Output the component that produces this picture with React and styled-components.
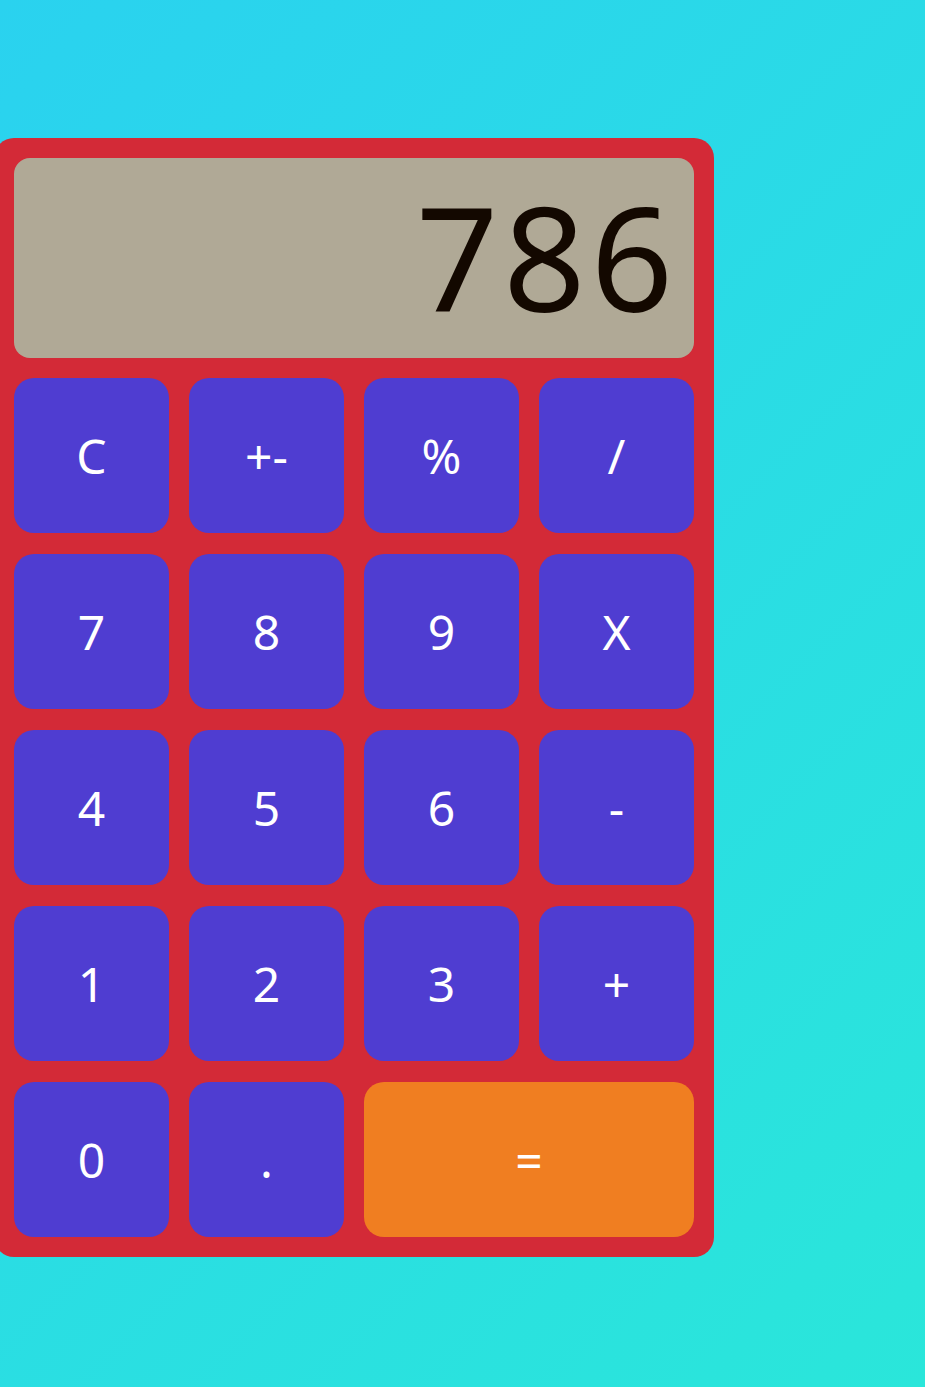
import React from "react";
import styled, { createGlobalStyle } from "styled-components";

const Global = createGlobalStyle`
  html, body { margin: 0; padding: 0; }
  body {
    min-height: 1387px;
    background: linear-gradient(135deg, #2ad2ef 0%, #2ae6da 100%);
    font-family: "Noto Sans", "Open Sans", sans-serif;
  }
`;

const Page = styled.div`
  padding-top: 138px;
  display: flex;
`;

const Calculator = styled.div`
  margin-left: -6px;
  width: 680px;
  padding: 20px;
  background: #d32a37;
  border-radius: 20px;
  display: flex;
  flex-direction: column;
  gap: 20px;
`;

const Display = styled.div`
  height: 200px;
  background: #b0a996;
  border-radius: 16px;
  display: flex;
  align-items: center;
  justify-content: flex-end;
  padding-right: 16px;
  padding-bottom: 4px;
  box-sizing: border-box;
  color: #130800;
  font-size: 144px;
  font-weight: 400;
  letter-spacing: 5px;
  line-height: 1;
`;

const Keys = styled.div`
  display: grid;
  grid-template-columns: repeat(4, 155px);
  grid-auto-rows: 155px;
  column-gap: 20px;
  row-gap: 21px;
`;

const Key = styled.button`
  grid-column: span ${(p) => p.$span || 1};
  border: none;
  border-radius: 20px;
  background: ${(p) => (p.$accent ? "#f07e21" : "#4f3dd1")};
  color: #ffffff;
  font-family: inherit;
  font-size: 48px;
  font-weight: 400;
  display: flex;
  align-items: center;
  justify-content: center;
  padding: 0;
  cursor: pointer;
`;

const keys = [
  ["C"], ["+-"], ["%"], ["/"],
  ["7"], ["8"], ["9"], ["X"],
  ["4"], ["5"], ["6"], ["-"],
  ["1"], ["2"], ["3"], ["+"],
  ["0"], ["."], ["=", 2, true],
];

export default function App() {
  return (
    <>
      <Global />
      <Page>
        <Calculator>
          <Display>786</Display>
          <Keys>
            {keys.map(([label, span, accent]) => (
              <Key key={label} $span={span} $accent={accent}>
                {label}
              </Key>
            ))}
          </Keys>
        </Calculator>
      </Page>
    </>
  );
}
